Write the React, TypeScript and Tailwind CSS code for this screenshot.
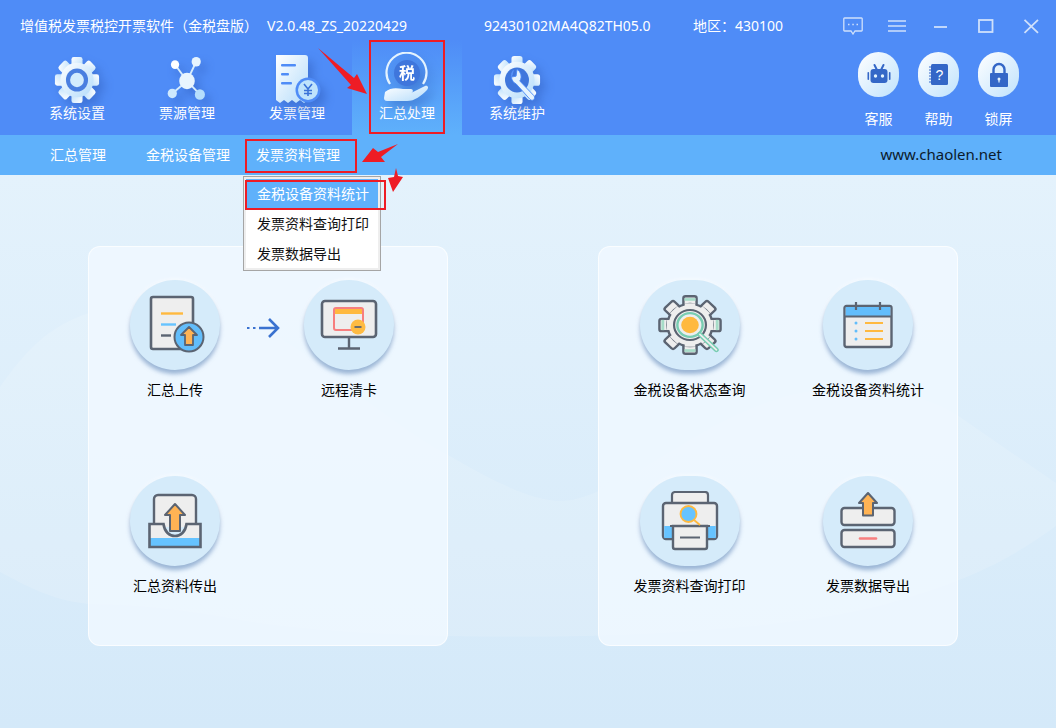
import React from 'react'

type NavItem = { label: string, icon: React.ReactNode, active?: boolean }
type ToolItem = { label: string, icon: React.ReactNode, wide?: boolean }

const W = 'url(#navFill)'

const GearNav = () => (
    <svg width="46" height="50" viewBox="0 0 50 52" preserveAspectRatio="none">
        <g fill={W}>
            {[0, 45, 90, 135, 180, 225, 270, 315].map((a) => (
                <rect key={a} x="19" y="2" width="12" height="12" rx="2.5" transform={`rotate(${a} 25 26)`} />
            ))}
            <circle cx="25" cy="26" r="18" />
        </g>
        <circle cx="25" cy="26" r="12" fill="#4a7fe0" />
        <circle cx="25" cy="26" r="7.5" fill="#d3ecfd" />
    </svg>
)

const NodesNav = () => (
    <svg width="46" height="50" viewBox="0 0 50 52" preserveAspectRatio="none">
        <g stroke="#d8eefd" strokeWidth="2">
            <line x1="25" y1="27" x2="12" y2="10" />
            <line x1="25" y1="27" x2="35" y2="7" />
            <line x1="25" y1="27" x2="9" y2="40" />
            <line x1="25" y1="27" x2="39" y2="41" />
        </g>
        <circle cx="25" cy="27" r="8.5" fill="#e8f5fe" />
        <circle cx="12" cy="10" r="4.5" fill="#ffffff" />
        <circle cx="35" cy="7" r="5" fill="#e6f4fe" />
        <circle cx="9" cy="40" r="5" fill="#cfe9fd" />
        <circle cx="39" cy="41" r="5.5" fill="#b6defc" />
    </svg>
)

const BillNav = () => (
    <svg width="50" height="54" viewBox="0 0 50 54">
        <path d="M4 2h29a3 3 0 0 1 3 3v42l-4 3-4-3-4 3-4-3-4 3-4-3-4 3-4-3V2z" fill={W} />
        <g fill="#4f8cf7">
            <rect x="9" y="11" width="15" height="2.6" rx="1" />
            <rect x="9" y="20" width="8" height="2.6" rx="1" />
            <rect x="9" y="29" width="11" height="2.6" rx="1" />
        </g>
        <circle cx="36" cy="37" r="12.5" fill="#4f8cf7" />
        <circle cx="36" cy="37" r="10" fill="#bfe3fc" />
        <path d="M32 31l4 5 4-5M36 36v7M32 37.5h8M32 40.5h8" fill="none" stroke="#3a72d8" strokeWidth="1.6" />
    </svg>
)

const TaxNav = () => (
    <svg width="50" height="56" viewBox="0 0 50 56">
        <path d="M7 35A20 20 0 1 1 40 35" fill="none" stroke="#e4f3fe" strokeWidth="2.2" transform="translate(1 -3)" />
        <circle cx="25" cy="21" r="13" fill="#3f76dc" />
        <text x="25" y="27" textAnchor="middle" fontSize="16" fontWeight="700" fill="#ffffff" fontFamily="'Noto Sans CJK SC', sans-serif">税</text>
        <path d="M3 40c6-5 12-4 18-3h8c2 0 3 3 0 4h-8 8l14-7c3-1 4 2 2 4-6 6-12 11-20 11H5c-2 0-3-1-3-3z" fill={W} />
    </svg>
)

const WrenchNav = () => (
    <svg width="48" height="50" viewBox="0 0 52 52" preserveAspectRatio="none">
        <g fill={W}>
            {[0, 45, 90, 135, 180, 225, 270, 315].map((a) => (
                <rect key={a} x="20" y="1" width="12" height="11" rx="3" transform={`rotate(${a} 26 26)`} />
            ))}
            <circle cx="26" cy="26" r="19" />
        </g>
        <circle cx="26" cy="26" r="13" fill="#3f76dc" />
        <path d="M22 16a9 9 0 0 0 3 14l15 16c3 3 7-1 4-4L29 27c3-4 1-10-3-12l-1 7-5 1z" fill="#e6f4fe" stroke="#4f8cf7" strokeWidth="1" />
    </svg>
)

const RobotIcon = () => (
    <svg width="24" height="24" viewBox="0 0 24 24">
        <path d="M7.5 2l2.5 5M16.5 2L14 7" stroke="#3467c7" strokeWidth="2" strokeLinecap="round" />
        <rect x="3.5" y="6" width="17" height="14" rx="3" fill="#3467c7" />
        <rect x="0.5" y="9" width="1.6" height="8" rx="0.8" fill="#3467c7" />
        <rect x="21.9" y="9" width="1.6" height="8" rx="0.8" fill="#3467c7" />
        <circle cx="8.5" cy="13" r="1.7" fill="#e3f3fe" />
        <circle cx="15.5" cy="13" r="1.7" fill="#e3f3fe" />
    </svg>
)

const BookIcon = () => (
    <svg width="22" height="24" viewBox="0 0 22 24">
        <rect x="3" y="1" width="17" height="21" rx="1.5" fill="#3467c7" />
        <path d="M1 4h3M1 7h3M1 10h3M1 13h3M1 16h3M1 19h3" stroke="#3467c7" strokeWidth="1.2" />
        <text x="11.5" y="17" textAnchor="middle" fontSize="14" fill="#ffffff" fontFamily="'Liberation Sans', sans-serif">?</text>
    </svg>
)

const LockIcon = () => (
    <svg width="22" height="26" viewBox="0 0 22 26">
        <path d="M5.5 12V7.5a5.5 5.5 0 0 1 11 0V12" fill="none" stroke="#3467c7" strokeWidth="2.4" />
        <rect x="2" y="11" width="18" height="14" rx="1" fill="#3467c7" />
        <circle cx="11" cy="17" r="1.5" fill="#e3f3fe" />
        <rect x="10.4" y="17" width="1.2" height="3.5" fill="#e3f3fe" />
    </svg>
)

const ink = '#5b6472'

const UploadDoc = () => (
    <svg width="60" height="60" viewBox="-4 0 60 60">
        <path d="M2 4a2 2 0 0 1 2-2h38a2 2 0 0 1 2 2v48a2 2 0 0 1-2 2H4a2 2 0 0 1-2-2z" fill="#eeeeee" stroke={ink} strokeWidth="2.6" />
        <path d="M12 18.5h22" stroke="#ffb93f" strokeWidth="2.4" />
        <path d="M12 29.5h15" stroke="#66c3ff" strokeWidth="2.4" />
        <path d="M12 40.5h10" stroke={ink} strokeWidth="2.4" />
        <circle cx="40" cy="42" r="14.5" fill="#62bdfb" stroke={ink} strokeWidth="2" />
        <path d="M40 32l8 8h-4v10h-8V40h-4z" fill="#ffb354" stroke={ink} strokeWidth="1.8" strokeLinejoin="round" />
    </svg>
)

const Monitor = () => (
    <svg width="58" height="52" viewBox="0 0 58 52">
        <rect x="2" y="2" width="54" height="36" rx="3" fill="#eeeeee" stroke={ink} strokeWidth="2.6" />
        <path d="M29 38v11M18 49.5h22" stroke={ink} strokeWidth="2.4" />
        <rect x="14" y="9" width="29" height="22" rx="2" fill="none" stroke="#f77f7f" strokeWidth="2" />
        <rect x="15" y="10" width="27" height="5" fill="#ffb93f" />
        <circle cx="38" cy="28" r="7.5" fill="#ffbb42" />
        <path d="M34.5 28h7" stroke={ink} strokeWidth="1.8" />
    </svg>
)

const Outbox = () => (
    <svg width="54" height="56" viewBox="0 0 54 56">
        <path d="M6 34V6a4 4 0 0 1 4-4h34a4 4 0 0 1 4 4v28z" fill="#eeeeee" />
        <path d="M6 31V6a4 4 0 0 1 4-4h34a4 4 0 0 1 4 4v25" fill="none" stroke={ink} strokeWidth="2.4" />
        <path d="M1.5 31h14c1 8 6 12 11.5 12s10.5-4 11.5-12h14v22h-51z" fill="#eeeeee" />
        <rect x="2" y="45" width="50" height="8" fill="#66c3ff" />
        <path d="M1.5 31h14c1 8 6 12 11.5 12s10.5-4 11.5-12h14v23h-51z" fill="none" stroke={ink} strokeWidth="2.6" />
        <path d="M27 11l10 11h-5v16H22V22h-5z" fill="#ffb354" stroke={ink} strokeWidth="2" strokeLinejoin="round" />
    </svg>
)

const GearSearch = () => (
    <svg width="66" height="60" viewBox="3 0 60 58" preserveAspectRatio="none">
        {[0, 45, 90, 135, 180, 225, 270, 315].map((a) => (
            <g key={a} transform={`rotate(${a} 33 29)`}>
                <rect x="27" y="1.2" width="12" height="12" rx="2" fill="#eeeeee" stroke={ink} strokeWidth="2.2" />
                {a % 90 === 0 && <rect x="28" y="3" width="10" height="2.6" fill="#a6dcc8" />}
            </g>
        ))}
        <circle cx="33" cy="29" r="20.5" fill="#eeeeee" stroke={ink} strokeWidth="2.2" />
        {[0, 45, 90, 135, 180, 225, 270, 315].map((a) => (
            <rect key={a} x="28.2" y="8" width="9.6" height="6" fill="#eeeeee" transform={`rotate(${a} 33 29)`} />
        ))}
        <circle cx="33" cy="29" r="14.5" fill="#eeeeee" stroke={ink} strokeWidth="2" />
        <circle cx="33" cy="29" r="11.5" fill="#eeeeee" stroke="#78cdb2" strokeWidth="2.2" />
        <circle cx="33" cy="29" r="8" fill="#ffb93f" />
        <path d="M42 38l15 15" stroke="#78cdb2" strokeWidth="4.5" strokeLinecap="round" />
        <path d="M42 38l15 15" stroke="#eeeeee" strokeWidth="1.6" strokeLinecap="round" />
    </svg>
)

const CalendarIcon = () => (
    <svg width="50" height="48" viewBox="0 0 50 48">
        <rect x="1.5" y="5" width="47" height="41" rx="2" fill="#eeeeee" stroke={ink} strokeWidth="2.4" />
        <path d="M2.7 15V6h44.6v9z" fill="#62bdfb" />
        <path d="M2 15.5h46" stroke={ink} strokeWidth="2" />
        <path d="M13 1v8M37 1v8" stroke={ink} strokeWidth="2.2" />
        <circle cx="13" cy="22" r="1.5" fill="#62bdfb" />
        <circle cx="13" cy="30" r="1.5" fill="#62bdfb" />
        <circle cx="13" cy="38" r="1.5" fill="#62bdfb" />
        <path d="M22 22h18M22 30h18M22 38h18" stroke="#ffb93f" strokeWidth="2.2" />
    </svg>
)

const PrinterIcon = () => (
    <svg width="58" height="60" viewBox="0 0 58 60">
        <path d="M11 12V4a3 3 0 0 1 3-3h30a3 3 0 0 1 3 3v8z" fill="#eeeeee" stroke={ink} strokeWidth="2.2" />
        <rect x="2" y="12" width="54" height="36" rx="3" fill="#eeeeee" stroke={ink} strokeWidth="2.4" />
        <path d="M3.2 35h51.6v12H3.2z" fill="#66c3ff" />
        <path d="M9 35h40" stroke={ink} strokeWidth="2.2" />
        <path d="M12 35v21a2 2 0 0 0 2 2h30a2 2 0 0 0 2-2V35z" fill="#eeeeee" stroke={ink} strokeWidth="2.4" />
        <path d="M19 46.5h20" stroke={ink} strokeWidth="2" />
        <circle cx="27.5" cy="23" r="8" fill="#66c3ff" stroke="#ffb93f" strokeWidth="1.8" />
        <path d="M33 29l6 5" stroke="#ffb93f" strokeWidth="1.8" />
    </svg>
)

const ExportIcon = () => (
    <svg width="56" height="58" viewBox="0 0 56 58">
        <rect x="1.5" y="16" width="53" height="17" rx="3" fill="#eeeeee" stroke={ink} strokeWidth="2.4" />
        <rect x="1.5" y="38" width="53" height="17" rx="3" fill="#eeeeee" stroke={ink} strokeWidth="2.4" />
        <path d="M28 1l9 10h-4v12.5H23V11h-4z" fill="#ffb354" stroke={ink} strokeWidth="2" strokeLinejoin="round" />
        <path d="M20 46.5h16" stroke="#f77f7f" strokeWidth="2.6" strokeLinecap="round" />
    </svg>
)

const navItems: NavItem[] = [
    { label: '系统设置', icon: <GearNav /> },
    { label: '票源管理', icon: <NodesNav /> },
    { label: '发票管理', icon: <BillNav /> },
    { label: '汇总处理', icon: <TaxNav />, active: true },
    { label: '系统维护', icon: <WrenchNav /> },
]

const sideItems = [
    { label: '客服', icon: <RobotIcon /> },
    { label: '帮助', icon: <BookIcon /> },
    { label: '锁屏', icon: <LockIcon /> },
]

const ToolButton = ({ label, icon, wide }: ToolItem) => {
    return (
        <div className="flex flex-col items-center">
            <div className={`${wide ? 'w-[100px]' : 'w-[90px]'} h-[90px] rounded-full bg-[#d5ebfa] shadow-[0_4px_4px_rgba(95,135,185,0.6),0_0_5px_rgba(255,255,255,0.9)] flex items-center justify-center`}>
                {icon}
            </div>
            <span className="mt-[10px] text-sm leading-5 text-black whitespace-nowrap">{label}</span>
        </div>
    )
}

const App = () => {
    return (
        <div className="relative w-[1056px] h-[728px] overflow-hidden bg-[#d9ecfa] font-['Noto_Sans','Noto_Sans_CJK_SC',sans-serif]">
            <svg className="absolute w-0 h-0">
                <defs>
                    <linearGradient id="navFill" x1="0" y1="0" x2="1" y2="1">
                        <stop offset="0" stopColor="#ffffff" />
                        <stop offset="1" stopColor="#b4dcfb" />
                    </linearGradient>
                </defs>
            </svg>

            {/* header */}
            <div className="h-[135px] bg-[#4f8cf7] text-white flex flex-col">
                <div className="h-[40px] pt-[16px] pl-[20px] flex items-start">
                    <span className="text-sm leading-5 w-[247px] whitespace-nowrap">增值税发票税控开票软件（金税盘版）</span>
                    <span className="text-sm leading-5 w-[217px] whitespace-nowrap">V2.0.48_ZS_20220429</span>
                    <span className="text-sm leading-5 w-[209px] whitespace-nowrap">92430102MA4Q82TH05.0</span>
                    <span className="text-sm leading-5 w-[150px] whitespace-nowrap">地区：430100</span>
                    <div className="flex items-center h-5 gap-[25px] text-[#cfe0fb]">
                        <svg width="20" height="18" viewBox="0 0 20 18" fill="none" stroke="currentColor" strokeWidth="1.3">
                            <path d="M1.5 1h17a.7.7 0 0 1 .7.7v11.6a.7.7 0 0 1-.7.7H12l-2 3-2-3H1.5a.7.7 0 0 1-.7-.7V1.7A.7.7 0 0 1 1.5 1z" />
                            <path d="M5 7.5h1.5M9.3 7.5h1.5M13.5 7.5H15" strokeWidth="1.6" />
                        </svg>
                        <svg width="18" height="12" viewBox="0 0 18 12" stroke="currentColor" strokeWidth="1.6">
                            <path d="M0 1h18M0 6h18M0 11h18" />
                        </svg>
                        <svg width="20" height="14" viewBox="0 0 20 14" stroke="currentColor" strokeWidth="1.8">
                            <path d="M3 8h13" />
                        </svg>
                        <svg width="20" height="15" viewBox="0 0 20 15" fill="none" stroke="currentColor" strokeWidth="1.8">
                            <rect x="3" y="1" width="13.5" height="12" />
                        </svg>
                        <svg width="20" height="15" viewBox="0 0 20 15" stroke="currentColor" strokeWidth="1.8">
                            <path d="M3.5.8l13.5 13M17 .8L3.5 13.8" />
                        </svg>
                    </div>
                </div>
                <div className="flex-1 flex">
                    <div className="pl-[22px] flex">
                        {navItems.map((item) => (
                            <div key={item.label} className={`w-[110px] flex flex-col items-center pt-[13px] ${item.active ? 'bg-gradient-to-b from-[#4f8cf7] to-[#5fb1fb]' : ''}`}>
                                <div className="h-[54px] flex items-center justify-center drop-shadow-[5px_6px_5px_rgba(40,80,170,0.4)]">
                                    {item.icon}
                                </div>
                                <span className="text-sm leading-5 mt-[-4px] whitespace-nowrap">{item.label}</span>
                            </div>
                        ))}
                    </div>
                    <div className="ml-auto mr-[37px] flex gap-[19px] pt-[12px]">
                        {sideItems.map((item) => (
                            <div key={item.label} className="w-[41px] flex flex-col items-center">
                                <div className="w-[41px] h-[45px] rounded-full bg-gradient-to-br from-white to-[#bfe2fc] flex items-center justify-center">
                                    {item.icon}
                                </div>
                                <span className="text-sm leading-5 mt-[12px] whitespace-nowrap">{item.label}</span>
                            </div>
                        ))}
                    </div>
                </div>
            </div>

            {/* sub menu */}
            <div className="h-[40px] bg-[#5fb1fb] flex items-center pl-[50px] pr-[54px] text-sm text-white">
                <span className="w-[96px]">汇总管理</span>
                <span className="w-[110px]">金税设备管理</span>
                <span>发票资料管理</span>
                <span className="ml-auto text-[15px] text-[#0b1a2c]">www.chaolen.net</span>
            </div>

            {/* body */}
            <div className="relative h-[553px] bg-gradient-to-b from-[#e4f2fc] to-[#d4e9f9]">
                <svg className="absolute inset-0" width="1056" height="553" viewBox="0 0 1056 553">
                    <path d="M0 212C40 155 70 135 150 125C260 115 340 220 448 280C500 310 540 330 572 325C640 310 720 225 820 215C880 210 930 220 963 244C1000 270 1030 290 1056 308V351C1010 385 970 404 900 425C760 470 380 470 240 445C170 432 130 430 88 429C50 425 25 410 0 397z" fill="#ffffff" opacity="0.13" />
                </svg>

                <div className="relative flex pl-[88px] pt-[71px] gap-[150px]">
                    <div className="relative w-[360px] h-[400px] rounded-xl border border-white/70 bg-[#f0f8ff]/85 pt-[33px] grid grid-cols-[172px_176px] grid-rows-[196px_196px]">
                        <ToolButton label="汇总上传" icon={<UploadDoc />} />
                        <ToolButton label="远程清卡" icon={<Monitor />} />
                        <ToolButton label="汇总资料传出" icon={<Outbox />} />
                        <div className="absolute left-[157px] top-[70px]">
                            <svg width="34" height="22" viewBox="0 0 34 22" fill="none" stroke="#3a72d0" strokeWidth="2.6">
                                <path d="M13 11h19M23 2l9 9-9 9" />
                                <path d="M1 11h2.5M7 11h2.5" strokeWidth="2" />
                            </svg>
                        </div>
                    </div>
                    <div className="w-[360px] h-[400px] rounded-xl border border-white/70 bg-[#f0f8ff]/85 pt-[33px] grid grid-cols-[181px_176px] grid-rows-[196px_196px]">
                        <ToolButton label="金税设备状态查询" icon={<GearSearch />} wide />
                        <ToolButton label="金税设备资料统计" icon={<CalendarIcon />} />
                        <ToolButton label="发票资料查询打印" icon={<PrinterIcon />} wide />
                        <ToolButton label="发票数据导出" icon={<ExportIcon />} />
                    </div>
                </div>
            </div>

            {/* dropdown */}
            <div className="absolute left-[243px] top-[176px] w-[138px] h-[95px] bg-[#eeeeee] border border-[#a5a5a5] p-[2px] text-sm text-[#111]">
                <div className="bg-white h-full">
                    <div className="h-[30px] pl-[11px] flex items-center bg-[#5fb1fb] text-white whitespace-nowrap">金税设备资料统计</div>
                    <div className="h-[30px] pl-[11px] flex items-center whitespace-nowrap">发票资料查询打印</div>
                    <div className="h-[30px] pl-[11px] flex items-center whitespace-nowrap">发票数据导出</div>
                </div>
            </div>

            {/* red annotation marks */}
            <div className="absolute left-[369px] top-[40px] w-[76px] h-[94px] border-2 border-[#ee1c25]" />
            <div className="absolute left-[245px] top-[139px] w-[112px] h-[34px] border-2 border-[#ee1c25]" />
            <div className="absolute left-[245px] top-[180px] w-[141px] h-[30px] border-2 border-[#ee1c25]" />
            <svg className="absolute left-0 top-0" width="420" height="200" viewBox="0 0 420 200" fill="#ee1c25">
                <path d="M318 48l36 30 3-4 10 20-20-6 4-3z" />
                <path d="M398 144L378 152L373 148L362 162L385 162L381 157z" />
                <path d="M396 168L394 177L388 178L393 192L403 177L398 176z" />
            </svg>
        </div>
    )
}

export default App
